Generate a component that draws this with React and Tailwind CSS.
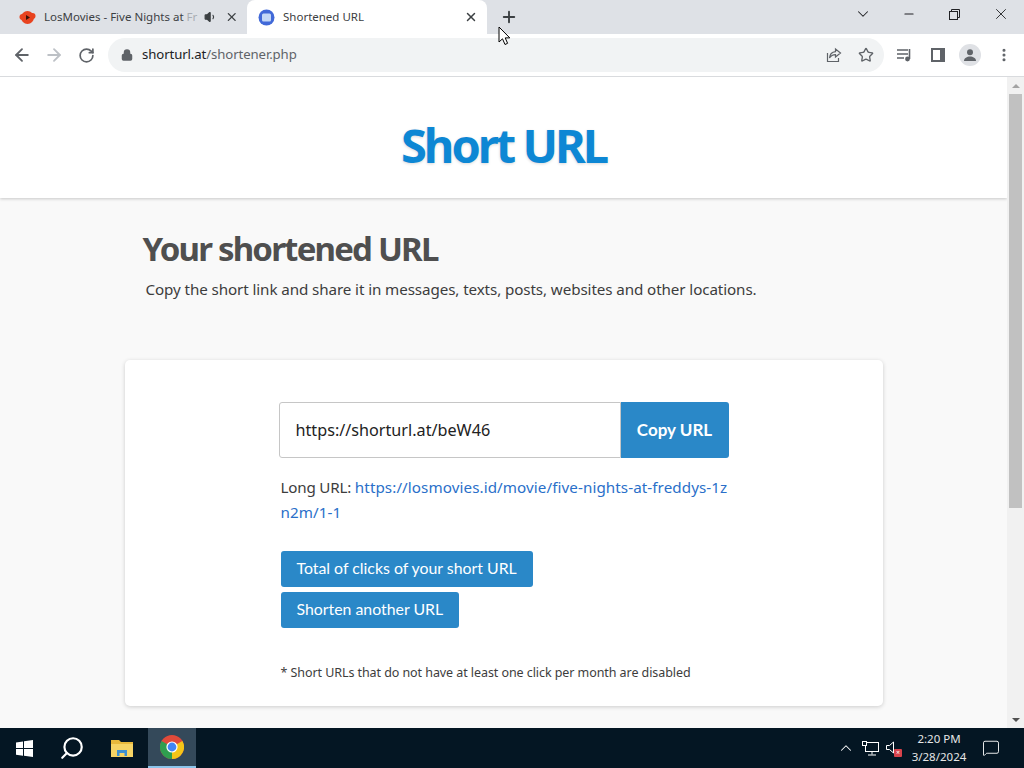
import React from 'react';
import { ArrowLeft, ArrowRight, RotateCw, Lock, X, Plus, Star, ChevronDown, Minus, Search, ChevronUp, MessageSquare, MoreVertical, Volume1 } from 'lucide-react';

const sans = "font-['Noto_Sans',sans-serif]";

// Browser tab strip with the two open tabs and the window controls
const TabStrip = () => (
  <div className={`h-[34px] bg-[#dee1e6] flex items-end pl-2 ${sans} text-[11.5px] text-[#3c4043]`}>
    <div className="w-[239px] h-[34px] flex items-center pl-[11px] pr-[9px]">
      <svg width="17" height="17" viewBox="0 0 17 17" className="shrink-0">
        <circle cx="8.5" cy="8.5" r="6.5" fill="#e8431f" />
        <circle cx="3.5" cy="8" r="3" fill="#e8431f" />
        <circle cx="13.5" cy="7" r="3" fill="#e8431f" />
        <path d="M7 6l4 2.5L7 11z" fill="#3a1208" />
      </svg>
      <span className="ml-[8px] w-[150px] whitespace-nowrap">LosMovies - Five Nights at <span className="text-[#a9adb3]">Fr</span></span>
      <Volume1 size={14} className="ml-[10px] text-[#3c4043] fill-[#3c4043]" />
      <X size={14} strokeWidth={2.5} className="ml-[7px] text-[#3c4043]" />
    </div>
    <div className="w-[240px] h-[34px] bg-white rounded-t-[8px] flex items-center pl-[11px] pr-[9px]">
      <svg width="17" height="17" viewBox="0 0 17 17" className="shrink-0">
        <circle cx="8.5" cy="8.5" r="8" fill="#4169d8" />
        <rect x="4" y="4.5" width="9" height="8" rx="1.5" fill="#c4d8f6" />
      </svg>
      <span className="ml-[8px] flex-1">Shortened URL</span>
      <X size={14} strokeWidth={2.5} className="text-[#3c4043]" />
    </div>
    <Plus size={18} strokeWidth={2.5} className="ml-[13px] mb-[8px] text-[#3c4043]" />
    <div className="flex-1" />
    <div className="h-[34px] flex items-center text-[#202124]">
      <ChevronDown size={18} strokeWidth={1.4} className="mb-[6px] mr-[30px]" />
      <Minus size={14} strokeWidth={1.8} className="mb-[6px] mr-[33px]" />
      <svg width="11" height="11" viewBox="0 0 11 11" fill="none" stroke="#202124" className="mb-[6px] mr-[32px]">
        <rect x="0.5" y="2.5" width="8" height="8" />
        <path d="M2.5 2.5v-2h8v8h-2" />
      </svg>
      <X size={18} strokeWidth={1.2} className="mb-[6px] mr-[14px]" />
    </div>
  </div>
);

// Address bar and toolbar icons
const Toolbar = () => (
  <div className="h-[43px] bg-white border-b border-[#d9dbde] flex items-center pl-[12px] font-['Noto_Sans',sans-serif]">
    <ArrowLeft size={20} strokeWidth={2.2} className="text-[#5f6368]" />
    <ArrowRight size={20} strokeWidth={2.2} className="ml-[12px] text-[#bdc1c6]" />
    <RotateCw size={17} strokeWidth={2.4} className="ml-[14px] text-[#5f6368]" />
    <div className="ml-[13px] w-[776px] h-[34px] rounded-full bg-[#f1f3f4] flex items-center pl-[13px] pr-[10px]">
      <Lock size={12} strokeWidth={3} className="text-[#5f6368] fill-[#5f6368]" />
      <span className="ml-[9px] text-[13.2px] tracking-[-0.1px] text-[#202124]">shorturl.at<span className="text-[#5f6368]">/shortener.php</span></span>
      <div className="flex-1" />
      <svg width="16" height="16" viewBox="0 0 16 16" fill="none" stroke="#5f6368" strokeWidth="1.2">
        <path d="M1.5 6v8.5h11V11" />
        <path d="M9.5 2l5 4-5 4V7.6C7 7.6 5 8.5 3.5 11c.3-3.5 2.5-6 6-6.4z" />
      </svg>
      <Star size={16} strokeWidth={2} className="ml-[16px] text-[#5f6368]" />
    </div>
    <svg width="16" height="14" viewBox="0 0 16 14" className="ml-[13px]" fill="none" stroke="#5f6368" strokeWidth="1.6">
      <path d="M0 2h11M0 6h11M0 10h7" />
      <path d="M12.5 1v10" />
      <circle cx="10.5" cy="11" r="1.6" fill="#5f6368" />
    </svg>
    <svg width="14" height="14" viewBox="0 0 14 14" className="ml-[18px]">
      <rect width="14" height="14" fill="#5f6368" />
      <rect x="2" y="2" width="7" height="10" fill="#ffffff" />
    </svg>
    <div className="ml-[14px] w-[22px] h-[22px] rounded-full bg-[#dfe1e5] flex items-center justify-center">
      <svg width="14" height="14" viewBox="0 0 14 14" fill="#5f6368">
        <circle cx="7" cy="4.2" r="3" />
        <path d="M1 13c0-3 3-4.5 6-4.5s6 1.5 6 4.5z" />
      </svg>
    </div>
    <MoreVertical size={16} strokeWidth={2.6} className="ml-[15px] text-[#5f6368]" />
  </div>
);

const Scrollbar = () => (
  <div className="w-[17px] shrink-0 bg-[#f1f1f1] flex flex-col items-center">
    <div className="h-[17px] flex items-center justify-center">
      <div className="w-0 h-0 border-x-[4px] border-x-transparent border-b-[4px] border-b-[#a3a3a3]" />
    </div>
    <div className="w-[13px] h-[414px] bg-[#c1c1c1]" />
    <div className="flex-1" />
    <div className="h-[17px] flex items-center justify-center">
      <div className="w-0 h-0 border-x-[4px] border-x-transparent border-t-[4px] border-t-[#505050]" />
    </div>
  </div>
);

const ActionButton = ({ children }) => (
  <div className="w-fit h-[36px] px-[16px] pb-[2px] bg-[#2a88c8] rounded-[3px] flex items-center font-['Lato',sans-serif] text-[15.85px] text-white">
    {children}
  </div>
);

const Page = () => (
  <div className={`flex-1 min-w-0 bg-[#f9f9f9] ${sans} overflow-hidden`}>
    <header className="h-[121px] pt-[16px] bg-white shadow-[0_1px_3px_rgba(0,0,0,0.2)] flex items-center justify-center">
      <h1 className="text-[47px] font-bold text-[#0d87d4] tracking-[-3px] [text-shadow:0_1px_3px_rgba(0,0,0,0.15)]">Short URL</h1>
    </header>

    <div className="w-[758px] mx-auto">
      <h2 className="mt-[28px] ml-[18px] text-[33px] leading-[46px] font-bold text-[#4f4f4f] tracking-[-1.8px]">Your shortened URL</h2>
      <p className="mt-[5px] ml-[21px] text-[15.2px] leading-[24px] text-[#3d3d3d] tracking-[-0.1px] whitespace-nowrap">Copy the short link and share it in messages, texts, posts, websites and other locations.</p>

      <section className="mt-[59px] h-[346px] bg-white rounded-[5px] shadow-[0_1px_4px_rgba(0,0,0,0.18)] pt-[42px] pl-[154px]">
        <div className="w-[450px] h-[56px] flex">
          <div className="flex-1 border border-[#c6c6c6] rounded-l-[3px] flex items-center pl-[16px] text-[16.2px] text-[#222222]">https://shorturl.at/beW46</div>
          <div className="w-[108px] bg-[#2a88c8] rounded-r-[3px] flex items-center justify-center font-['Lato',sans-serif] font-bold text-[17px] text-white">Copy URL</div>
        </div>

        <p className="mt-[17px] ml-[2px] w-[449px] text-[15.2px] leading-[25px] text-[#3d3d3d] break-all">
          <span className="tracking-[-0.2px]">Long URL: </span><a className="text-[#2a6fc9] tracking-[0.08px]">https://losmovies.id/movie/five-nights-at-freddys-1zn2m/1-1</a>
        </p>

        <div className="mt-[26px] ml-[2px] flex flex-col gap-[5px]">
          <ActionButton>Total of clicks of your short URL</ActionButton>
          <ActionButton>Shorten another URL</ActionButton>
        </div>

        <p className="mt-[35px] ml-[2px] text-[12.5px] leading-[20px] text-[#3d3d3d] tracking-[-0.07px] whitespace-nowrap">* Short URLs that do not have at least one click per month are disabled</p>
      </section>
    </div>
  </div>
);

// Windows taskbar along the bottom
const Taskbar = () => (
  <div className="h-[40px] bg-[#041623] flex items-center font-['Noto_Sans',sans-serif] text-white">
    <svg width="17" height="17" viewBox="0 0 17 17" fill="#ffffff" className="ml-[16px]">
      <path d="M0 2.4l7-1v6.7H0zM8 1.2L17 0v8.1H8zM0 9h7v6.7l-7-1zM8 9h9v8l-9-1.2z" />
    </svg>
    <Search size={26} strokeWidth={2} className="ml-[26px] -scale-x-100 text-white" />
    <svg width="22" height="20" viewBox="0 0 22 20" className="ml-[26px]">
      <path d="M0 2h8l2 2h12v15H0z" fill="#e8b93c" />
      <rect y="6" width="22" height="13" fill="#f6d465" />
      <path d="M6 18v-6h10v6h-2.5v-3h-5v3z" fill="#3d8fd1" />
    </svg>
    <div className="ml-[15px] w-[48px] h-[40px] bg-[#34495a] border-b-[2px] border-[#8cc4ea] flex items-center justify-center">
      <svg width="24" height="24" viewBox="0 0 24 24">
        <circle cx="12" cy="12" r="12" fill="#e04a3a" />
        <path d="M12 12L1.6 6A12 12 0 0 0 12 24z" fill="#2f9e4f" />
        <path d="M12 12l0 12A12 12 0 0 0 22.4 6z" fill="#f5c518" />
        <circle cx="12" cy="12" r="5.6" fill="#ffffff" />
        <circle cx="12" cy="12" r="4.4" fill="#4285f4" />
      </svg>
    </div>
    <div className="flex-1" />
    <ChevronUp size={18} strokeWidth={1.4} />
    <svg width="17" height="15" viewBox="0 0 17 15" fill="none" stroke="#ffffff" className="ml-[7px]">
      <rect x="3.5" y="1.5" width="13" height="9" />
      <rect x="0.5" y="0.5" width="4" height="4" fill="#041623" />
      <path d="M10 10.5v3M6 14h8" />
    </svg>
    <div className="ml-[7px] relative w-[16px] h-[15px]">
      <svg width="9" height="13" viewBox="0 0 9 13" fill="none" stroke="#ffffff">
        <path d="M.5 4.5h3L7.5 1v11L3.5 8.5h-3z" />
      </svg>
      <div className="absolute right-0 bottom-[-1px] w-[8px] h-[8px] bg-[#d8434b] rounded-[1px] flex items-center justify-center text-[7px] leading-none text-white">×</div>
    </div>
    <div className="ml-[3px] w-[68px] text-center text-[11.5px] leading-[18px] text-[#e6e6e6]">
      <div>2:20 PM</div>
      <div>3/28/2024</div>
    </div>
    <MessageSquare size={18} strokeWidth={1.2} className="ml-[9px] mr-[24px]" />
  </div>
);

export default function App() {
  return (
    <div className="relative w-[1024px] h-[768px] flex flex-col overflow-hidden bg-white">
      <TabStrip />
      <Toolbar />
      <div className="flex-1 min-h-0 flex">
        <Page />
        <Scrollbar />
      </div>
      <Taskbar />
      {/* mouse pointer over the new tab button */}
      <svg width="13" height="20" viewBox="0 0 13 20" className="absolute left-[498px] top-[26px]">
        <path d="M1 1v15l3.5-3.2L7 18.5l2.6-1.2-2.4-5.4h4.6z" fill="#ffffff" stroke="#000000" strokeWidth="1" />
      </svg>
    </div>
  );
}
